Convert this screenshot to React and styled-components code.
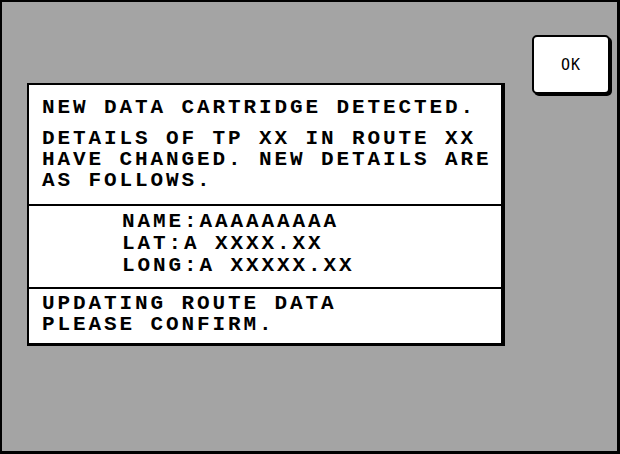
import React from 'react';
import styled, { createGlobalStyle } from 'styled-components';

const GlobalStyle = createGlobalStyle`
  html, body {
    margin: 0;
    padding: 0;
    background: #a4a4a4;
  }
`;

const Screen = styled.div`
  box-sizing: border-box;
  width: 620px;
  height: 454px;
  display: flex;
  align-items: flex-start;
  gap: 27px;
  padding-left: 25px;
  background: #a4a4a4;
  border: solid #000;
  border-width: 2px 3px 3px 2px;
`;

const Dialog = styled.div`
  box-sizing: border-box;
  width: 478px;
  margin-top: 81px;
  background: #fff;
  border: 2px solid #000;
  border-right-width: 4px;
  border-bottom-width: 3px;
  font-family: 'Liberation Mono', 'DejaVu Sans Mono', monospace;
  font-weight: bold;
  font-size: 21px;
  letter-spacing: 2.9px;
  color: #000;
`;

const Section = styled.div`
  padding: ${p => p.$pad};
  line-height: ${p => p.$lh}px;
  white-space: nowrap;

  & + & {
    border-top: 2px solid #000;
  }
`;

const Para = styled.div`
  & + & {
    margin-top: 10px;
  }
`;

const Line = styled.div``;

const OkButton = styled.button`
  box-sizing: border-box;
  width: 78px;
  height: 59px;
  margin-top: 33px;
  padding: 0;
  background: #fff;
  border: 2px solid #000;
  border-radius: 5px;
  box-shadow: 2px 2px 0 #000;
  font-family: 'DejaVu Sans Mono', 'Liberation Mono', monospace;
  font-size: 15px;
  letter-spacing: 1px;
  color: #000;
  cursor: pointer;
`;

export default function App() {
  return (
    <>
      <GlobalStyle />
      <Screen>
        <Dialog>
          <Section $pad="12px 0 13px 13px" $lh={21}>
            <Para>
              <Line>NEW DATA CARTRIDGE DETECTED.</Line>
            </Para>
            <Para>
              <Line>DETAILS OF TP XX IN ROUTE XX</Line>
              <Line>HAVE CHANGED. NEW DETAILS ARE</Line>
              <Line>AS FOLLOWS.</Line>
            </Para>
          </Section>
          <Section $pad="5px 0 10px 93px" $lh={22}>
            <Line>NAME:AAAAAAAAA</Line>
            <Line>LAT:A XXXX.XX</Line>
            <Line>LONG:A XXXXX.XX</Line>
          </Section>
          <Section $pad="4px 0 8px 13px" $lh={21}>
            <Line>UPDATING ROUTE DATA</Line>
            <Line>PLEASE CONFIRM.</Line>
          </Section>
        </Dialog>
        <OkButton>OK</OkButton>
      </Screen>
    </>
  );
}
